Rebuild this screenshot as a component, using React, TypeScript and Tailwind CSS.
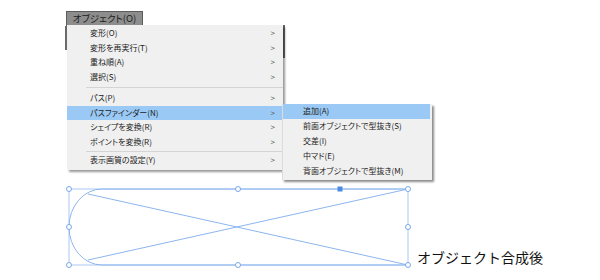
import React from "react";

const MAIN_ITEMS: (string | null)[] = [
  "変形(O)",
  "変形を再実行(T)",
  "重ね順(A)",
  "選択(S)",
  null,
  "パス(P)",
  "パスファインダー(N)",
  "シェイプを変換(R)",
  "ポイントを変換(R)",
  null,
  "表示画質の設定(Y)",
];

const SUB_ITEMS = [
  "追加(A)",
  "前面オブジェクトで型抜き(S)",
  "交差(I)",
  "中マド(E)",
  "背面オブジェクトで型抜き(M)",
];

const FONT = "font-['Noto_Sans_CJK_JP','Noto_Sans',sans-serif]";

function Handle({ x, y }: { x: number; y: number }) {
  return <circle cx={x} cy={y} r={2.5} fill="#fff" stroke="#7aa8ea" strokeWidth={1} />;
}

function Drawing() {
  const handles: [number, number][] = [
    [69, 189], [238, 189], [408, 189],
    [69, 227], [408, 227],
    [69, 265], [238, 265], [408, 265],
  ];
  return (
    <svg className="absolute left-0 top-0" width={600} height={280} viewBox="0 0 600 280">
      {/* bounding box */}
      <rect x={69} y={189} width={339} height={76} fill="none" stroke="#a9c8f3" strokeWidth={1} />
      {/* shape */}
      <g fill="none" stroke="#8db6ee" strokeWidth={1}>
        <path d="M102 189 A 33 38 0 0 0 102 265" />
        <line x1={102} y1={189} x2={408} y2={189} />
        <line x1={102} y1={265} x2={408} y2={265} />
        <line x1={88} y1={194} x2={408} y2={265} />
        <line x1={88} y1={260} x2={408} y2={189} />
      </g>
      {handles.map(([x, y]) => (
        <Handle key={`${x}-${y}`} x={x} y={y} />
      ))}
      <rect x={337.5} y={186.5} width={5} height={5} fill="#4b8ce3" />
    </svg>
  );
}

export default function App() {
  return (
    <div className={`relative w-[600px] h-[280px] bg-white overflow-hidden ${FONT}`}>
      <Drawing />

      {/* menu bar item */}
      <div className="absolute left-[66px] top-[11px] w-[77px] h-[15px] bg-[#8d8d8d] border border-[#5c5c5c] flex items-center justify-center text-[9.5px] leading-none text-[#1c1c1c] [font-feature-settings:'palt']">
        オブジェクト(O)
      </div>

      {/* window pieces behind the menu */}
      <div className="absolute left-[65px] top-[26px] w-[2px] h-[24px] bg-[#6a6a6a]" />
      <div className="absolute left-[283px] top-[25px] w-[2px] h-[33px] bg-[#6a6a6a]" />

      {/* main menu */}
      <div className="absolute left-[67px] top-[25px] w-[216px] pt-[1px] pb-[2px] bg-[#f0f0f0] shadow-[2px_2px_2px_rgba(0,0,0,0.4)] [font-feature-settings:'palt']">
        {MAIN_ITEMS.map((label, i) =>
          label === null ? (
            <div key={i} className={`flex items-center pl-[19px] ${i === 4 ? "h-[7px]" : "h-[4px]"}`}>
              <div className="h-px w-full bg-[#d4d4d4]" />
            </div>
          ) : (
            <div
              key={i}
              className={`flex items-center justify-between h-[14.5px] pl-[23px] pr-[8px] text-[8px] leading-none text-[#222] ${
                label === "パスファインダー(N)" ? "bg-[#99c9f4]" : ""
              }`}
            >
              <span>{label}</span>
              <span className="text-[8px] text-[#555]">&gt;</span>
            </div>
          )
        )}
      </div>

      {/* submenu */}
      <div className="absolute left-[282px] top-[104px] w-[150px] pb-[2px] bg-[#f0f0f0] border-l border-[#dcdcdc] shadow-[2px_2px_2px_rgba(0,0,0,0.45)] [font-feature-settings:'palt']">
        {SUB_ITEMS.map((label, i) => (
          <div
            key={label}
            className={`flex items-center h-[14.8px] pl-[20px] text-[8px] leading-none text-[#222] ${
              i === 0 ? "bg-[#99c9f4] mr-[2px]" : ""
            }`}
          >
            {label}
          </div>
        ))}
      </div>

      <div className="absolute left-[417px] top-[250px] text-[14px] leading-none text-[#111]">
        オブジェクト合成後
      </div>
    </div>
  );
}
